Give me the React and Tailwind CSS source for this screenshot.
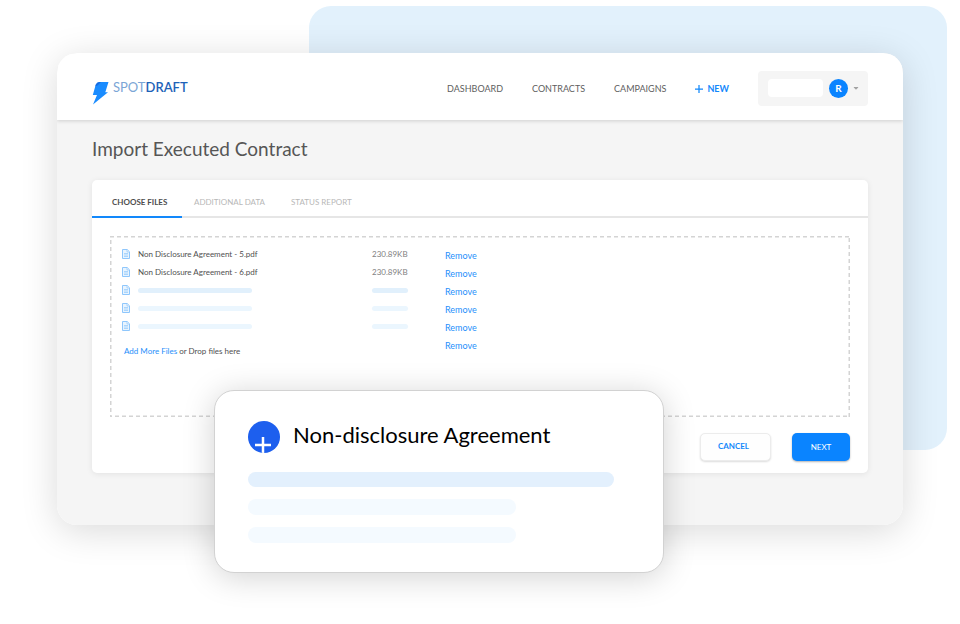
import { FaCaretDown } from 'react-icons/fa';

const NAV_LINKS = ['DASHBOARD', 'CONTRACTS', 'CAMPAIGNS'];

const FILES = [
  { id: 1, name: 'Non Disclosure Agreement - 5.pdf', size: '230.89KB' },
  { id: 2, name: 'Non Disclosure Agreement - 6.pdf', size: '230.89KB' },
  { id: 3, bar: 'bg-[#e1f0fc]' },
  { id: 4, bar: 'bg-[#ebf6fe]' },
  { id: 5, bar: 'bg-[#ebf6fe]' },
];

const BoltLogo = () => (
  <svg viewBox="0 0 17 24" className="h-6 w-[17px]" aria-hidden="true">
    <path d="M3.800 3.500Q5 1 7 1H16.500L13.300 11.300H16L1 23.500l4-9.500H.8z" fill="#1a8cff" />
    <path d="M3.800 3.500Q5 1 7 1H9L5.500 4.500 3 5.500z" fill="#1257cf" opacity=".6" />
  </svg>
);

const FileIcon = () => (
  <svg viewBox="0 0 8 10" className="h-[10px] w-2" fill="#e9f4fe" stroke="#8fc7fc" aria-hidden="true">
    <path d="M.5.5h4.700l2.300 2.300v6.700h-7z" />
    <path d="M5 .5V3h2.500M2 4.500h4M2 6h4M2 7.500h4" strokeWidth=".7" />
  </svg>
);

const PlusIcon = ({ className }) => (
  <svg viewBox="0 0 16 16" className={className} fill="none" stroke="currentColor" aria-hidden="true">
    <path d="M8 0v16M0 8h16" strokeWidth="2.500" />
  </svg>
);

const Header = () => (
  <header className="relative flex h-[67px] items-center justify-between bg-white px-[35px] pt-[3px] shadow-[0_1px_4px_rgba(0,0,0,0.16)]">
    <a href="#" className="flex items-start pt-[10px]">
      <BoltLogo />
      <span className="ml-1 text-[13px] leading-none text-[#7ba6d6]">
        SPOT<span className="font-semibold text-[#1d62b8]">DRAFT</span>
      </span>
    </a>

    <div className="flex items-center">
      <nav className="flex items-center gap-[29px] pt-px text-[9px] text-[#606060]">
        {NAV_LINKS.map((label) => (
          <a key={label} href="#">{label}</a>
        ))}
        <a href="#" className="flex items-center gap-1 font-bold text-[#1288fb]">
          <PlusIcon className="h-2 w-2" /> NEW
        </a>
      </nav>
      <button type="button" aria-label="Account" className="ml-[29px] flex h-[35px] w-[110px] items-center rounded bg-[#f5f5f5] pl-[10px]">
        <span className="h-[18px] w-[55px] rounded bg-white" />
        <span className="ml-[6px] flex h-[19px] w-[19px] items-center justify-center rounded-full bg-[#0a84ff] text-[10px] font-bold text-white">R</span>
        <FaCaretDown className="ml-1 h-2 w-2 text-[#a3a3a3]" />
      </button>
    </div>
  </header>
);

const Tabs = () => (
  <div role="tablist" className="flex h-[38px] items-stretch border-b-2 border-[#e6e6e6] text-left text-[8px]">
    <button type="button" role="tab" aria-selected="true" className="-mb-[2px] w-[90px] border-b-2 border-[#1288fb] pl-5 pt-2 text-left font-bold text-[#4d4d4d]">
      CHOOSE FILES
    </button>
    <button type="button" role="tab" aria-selected="false" className="w-[97px] pl-3 pt-2 text-left text-[#b8b8b8]">
      ADDITIONAL DATA
    </button>
    <button type="button" role="tab" aria-selected="false" className="pl-3 pt-2 text-[#b8b8b8]">
      STATUS REPORT
    </button>
  </div>
);

const RemoveButton = () => (
  <button type="button" className="block pt-1 text-[9px] leading-[14px] text-[#1f8ffb]">Remove</button>
);

const FileTable = () => (
  <table className="w-full table-fixed text-left text-[8px]">
    <colgroup>
      <col className="w-4" />
      <col className="w-[234px]" />
      <col className="w-[73px]" />
      <col />
    </colgroup>
    <tbody>
      {FILES.map((file) => (
        <tr key={file.id} className="h-[18px]">
          <td className="p-0"><FileIcon /></td>
          <td className="p-0 text-[#505050]">
            {file.name ?? <div className={`h-[5px] w-[114px] rounded-full ${file.bar}`} />}
          </td>
          <td className="p-0 text-[#808080]">
            {file.size ?? <div className={`h-[5px] w-9 rounded-full ${file.bar}`} />}
          </td>
          <td className="p-0"><RemoveButton /></td>
        </tr>
      ))}
      <tr className="h-[18px]">
        <td colSpan={3} className="p-0 pt-[10px] pl-[2px] leading-3 text-[#505050]">
          <a href="#" className="text-[#1f8ffb]">Add More Files</a> or Drop files here
        </td>
        <td className="p-0 align-top"><RemoveButton /></td>
      </tr>
    </tbody>
  </table>
);

// CSS dashed borders come out too long at this width
const DashedOutline = () => (
  <svg className="pointer-events-none absolute inset-0 h-full w-full" fill="none" aria-hidden="true">
    <rect width="100%" height="100%" stroke="#d4d4d4" strokeWidth="3" strokeDasharray="4 3" />
  </svg>
);

const ImportCard = () => (
  <section className="rounded-[5px] bg-white shadow-[0_1px_6px_rgba(0,0,0,0.08)]">
    <Tabs />
    <div className="px-[18px] pt-[18px] pb-3">
      <div className="relative h-[181px] px-3 pt-[9px]">
        <DashedOutline />
        <FileTable />
      </div>
      <div className="mt-4 flex justify-end gap-[21px]">
        <button type="button" className="h-7 w-[71px] rounded-[5px] border border-[#ececec] bg-[#fefefe] pr-1 pb-[2px] text-[8px] font-bold text-[#1288fb] shadow-[0_1px_2px_rgba(0,0,0,0.14)]">
          CANCEL
        </button>
        <button type="button" className="h-7 w-[58px] rounded-[5px] bg-[#0a84ff] text-[8px] text-white shadow-[0_1px_2px_rgba(0,0,0,0.3)]">
          NEXT
        </button>
      </div>
    </div>
  </section>
);

const AgreementPopup = () => (
  <aside className="absolute top-[337px] left-[157px] w-[450px] rounded-[20px] border border-[#d2d2d2] bg-white px-[33px] pt-[30px] pb-[29px] shadow-[0_4px_32px_rgba(0,0,0,0.18)]">
    <div className="flex items-center">
      <button type="button" aria-label="Add agreement" className="flex h-8 w-8 items-end justify-center overflow-hidden rounded-full bg-[#1d5fee] pr-[2px] text-white">
        <PlusIcon className="h-4 w-4" />
      </button>
      <h2 className="ml-[13px] pb-1 text-[22px] leading-7 text-black">Non-disclosure Agreement</h2>
    </div>
    <div className="mt-[19px] h-[15px] w-[366px] rounded-full bg-[#e3f0fd]" />
    <div className="mt-3 h-4 w-[268px] rounded-full bg-[#f4faff]" />
    <div className="mt-3 h-4 w-[268px] rounded-full bg-[#f4faff]" />
  </aside>
);

export default function App() {
  return (
    <div className="relative min-h-screen bg-white px-[57px] pt-[53px] pb-24 font-[Lato,sans-serif]">
      <div className="absolute top-[6px] right-[13px] left-[309px] h-[444px] rounded-[22px] bg-[#e2f1fc]" />

      <main className="relative rounded-[20px] shadow-[0_6px_36px_rgba(0,0,0,0.15)]">
        <div className="overflow-hidden rounded-[20px] bg-[#f5f5f5]">
          <Header />
          <div className="px-[35px] pt-[14px] pb-[52px]">
            <h1 className="mb-4 text-[19px] leading-[30px] text-[#565656]">Import Executed Contract</h1>
            <ImportCard />
          </div>
        </div>
        <AgreementPopup />
      </main>
    </div>
  );
}
